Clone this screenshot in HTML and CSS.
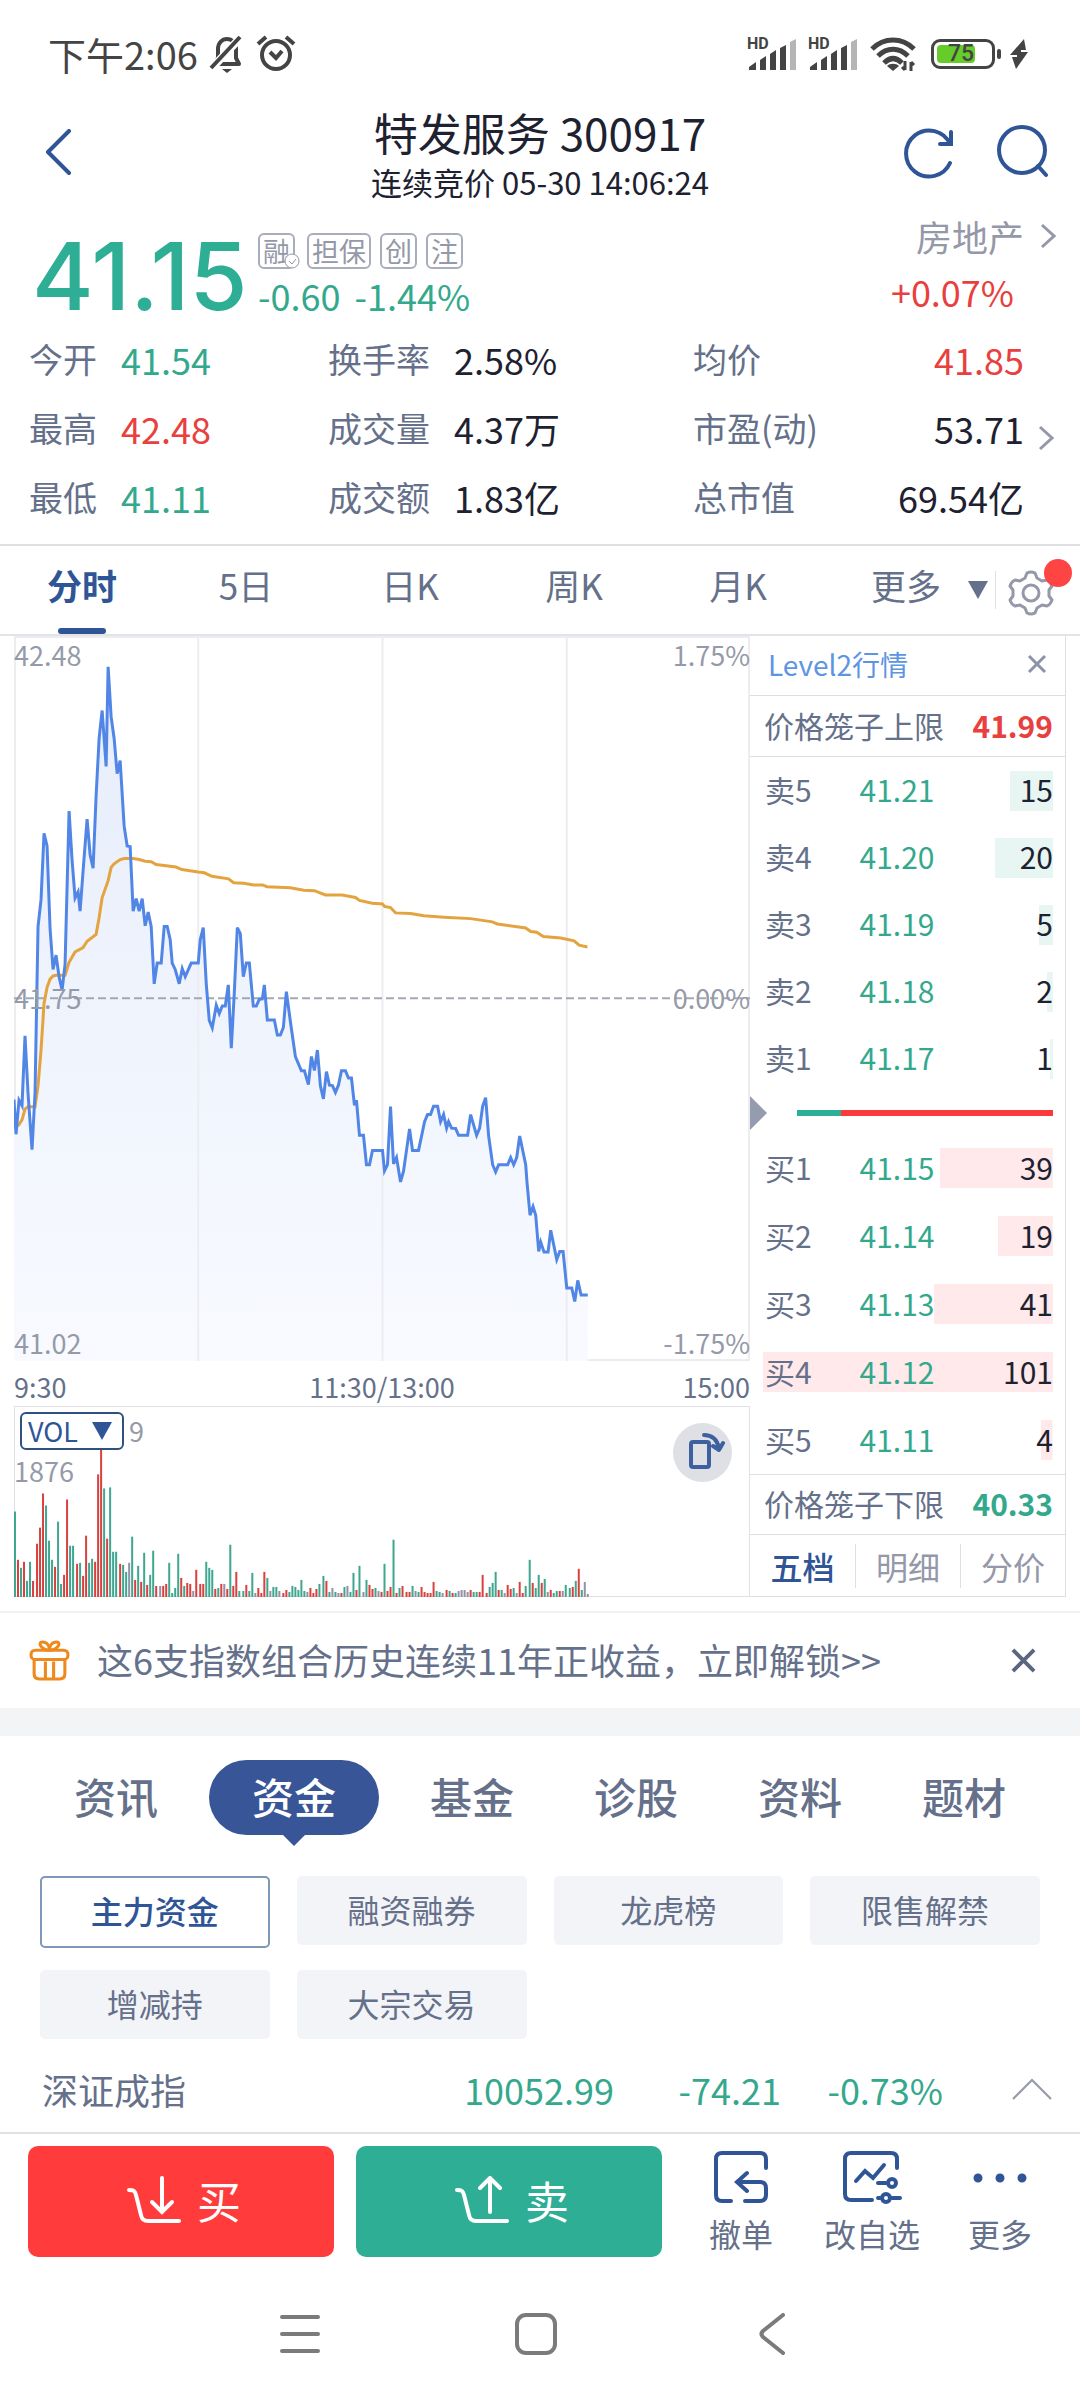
FILE: index.html
```html
<!DOCTYPE html>
<html lang="zh-CN">
  <head>
    <meta charset="UTF-8" />
    <meta name="viewport" content="width=device-width, initial-scale=1.0" />
    <title>特发服务 300917</title>
    <link rel="stylesheet" href="styles.css">
  </head>
  <body>
    <div class="status-bar">
      <div class="status-left">
        <span>下午2:06</span>
        <svg class="bell" viewBox="0 0 36 38" fill="none" stroke="#444" stroke-width="4">
          <path d="M6 29h24l-3-6V14c0-6-4-10-9-10s-9 4-9 10v9z" stroke-linejoin="round" />
          <path d="M32 2L3 33" stroke="#fff" stroke-width="8" />
          <path d="M31 2L2 33" />
          <path d="M13 34h10l-5 4z" fill="#444" stroke="none" />
        </svg>
        <svg class="alarm" viewBox="0 0 40 38" fill="none" stroke="#444" stroke-width="4">
          <circle cx="20" cy="20" r="14" />
          <path d="M2 9l8-7M38 9l-8-7M14 17l6 6 6-7" />
        </svg>
      </div>
      <div class="status-right">
        <svg class="signal" viewBox="0 0 50 34">
          <text x="0" y="12">HD</text>
          <path d="M2 33v-3l7-5v8zM13 33V23l6-4v14zM23 33V17l6-4v20zM33 33V11l6-3v25z" fill="#444" />
          <path d="M43 33V5l6-3v31z" fill="#b5b5b5" />
        </svg>
        <svg class="signal" viewBox="0 0 50 34">
          <text x="0" y="12">HD</text>
          <path d="M2 33v-3l7-5v8zM13 33V23l6-4v14zM23 33V17l6-4v20zM33 33V11l6-3v25z" fill="#444" />
          <path d="M43 33V5l6-3v31z" fill="#b5b5b5" />
        </svg>
        <svg class="wifi" viewBox="0 0 48 36" fill="none" stroke="#444" stroke-width="5">
          <path d="M3 13c12-12 30-12 42 0M9 20c9-9 21-9 30 0M15 27c6-6 12-6 18 0" />
          <path d="M18 30l6 5 6-5c-3-3-9-3-12 0z" fill="#444" stroke="none" />
          <path d="M36 25v9M36 34l-3-3M42 35v-9M42 26l3 3" stroke-width="3" />
        </svg>
        <span class="battery"><span class="battery-level">75</span></span>
        <svg class="bolt" viewBox="0 0 18 30"><path d="M14 0L0 16h7v2H2l4 12 12-17h-7v-2h5z" fill="#444" /></svg>
      </div>
    </div>

    <header class="header">
      <button class="icon-btn back" aria-label="返回">
        <svg viewBox="0 0 28 46" fill="none" stroke="#2f5597" stroke-width="4"><path d="M25 2L4 23l21 21" stroke-linecap="round" stroke-linejoin="round" /></svg>
      </button>
      <div class="title">
        <h1>特发服务 300917</h1>
        <p>连续竞价 05-30 14:06:24</p>
      </div>
      <div class="header-tools">
        <button class="icon-btn" aria-label="刷新">
          <svg viewBox="0 0 52 54" fill="none" stroke="#2f5597" stroke-width="4"><path d="M48 38A23 23 0 1 1 48 19M49 7v12H38" stroke-linecap="round" /></svg>
        </button>
        <button class="icon-btn" aria-label="搜索">
          <svg viewBox="0 0 52 54" fill="none" stroke="#2f5597" stroke-width="4"><circle cx="26" cy="25" r="23" /><path d="M42 41l8 9" stroke-linecap="round" /></svg>
        </button>
      </div>
    </header>

    <section class="quote">
      <strong class="price">41.15</strong>
      <div class="quote-info">
        <div class="tags">
          <span class="tag checked">融<svg viewBox="0 0 16 16" fill="#fff" stroke="#9498a8"><circle cx="8" cy="8" r="7" /><path d="M5 8l3 3 4-5" fill="none" /></svg></span>
          <span class="tag">担保</span>
          <span class="tag">创</span>
          <span class="tag">注</span>
        </div>
        <div class="change"><span>-0.60</span><span>-1.44%</span></div>
      </div>
      <a class="sector" href="#">
        <span class="sector-name">房地产</span>
        <svg class="chevron" viewBox="0 0 16 26"><path d="M2 2l12 11L2 24" /></svg>
        <span class="sector-change">+0.07%</span>
      </a>
    </section>

    <section class="stats">
      <dl>
        <div><dt>今开</dt><dd class="green">41.54</dd></div>
        <div><dt>最高</dt><dd class="red">42.48</dd></div>
        <div><dt>最低</dt><dd class="green">41.11</dd></div>
      </dl>
      <dl>
        <div><dt>换手率</dt><dd>2.58%</dd></div>
        <div><dt>成交量</dt><dd>4.37万</dd></div>
        <div><dt>成交额</dt><dd>1.83亿</dd></div>
      </dl>
      <dl class="wide">
        <div><dt>均价</dt><dd class="red">41.85</dd></div>
        <div><dt>市盈(动)</dt><dd>53.71</dd></div>
        <div><dt>总市值</dt><dd>69.54亿</dd></div>
      </dl>
      <svg class="chevron" viewBox="0 0 16 26"><path d="M2 2l12 11L2 24" /></svg>
    </section>

    <nav class="period-tabs">
      <button class="active">分时</button>
      <button>5日</button>
      <button>日K</button>
      <button>周K</button>
      <button>月K</button>
      <button class="more">更多<i class="caret"></i></button>
      <button class="settings" aria-label="设置">
        <svg viewBox="0 0 46 46" fill="none" stroke="#9498a8" stroke-width="3" stroke-linejoin="round">
          <path d="M19 3q4-2 8 0l2 5 5 3 5-1q4 2 5 6l-3 4v6l3 4q-1 4-5 6l-5-1-5 3-2 5q-4 2-8 0l-2-5-5-3-5 1q-4-2-5-6l3-4v-6l-3-4q1-4 5-6l5 1 5-3z" />
          <circle cx="23" cy="23" r="8" />
        </svg>
      </button>
    </nav>

    <main class="market">
      <div class="charts">
        <div class="price-chart">
          <svg viewBox="42 14 2205 2024" preserveAspectRatio="none">
            <defs>
              <linearGradient id="area" x1="0" y1="0" x2="0" y2="1">
                <stop offset="0" stop-color="#e6edfa" />
                <stop offset="1" stop-color="#f8faff" />
              </linearGradient>
            </defs>
            <path id="price-area" fill="url(#area)" />
            <path class="grid-line" d="M594 14V2038M1146 14V2038M1698 14V2038" />
            <path class="zero-line" d="M42 1025H2247" />
            <polyline class="avg-line" points="48,1385 57,1378 66,1365 75,1335 84,1328 105,1328 114,1270 123,1170 132,1040 141,995 150,972 159,963 168,961 195,961 207,925 225,896 249,884 261,866 288,847 297,800 306,745 324,697 333,660 342,650 360,638 372,635 399,635 417,638 435,643 453,644 468,652 527,659 545,666 594,673 612,675 635,685 685,692 700,703 730,704 760,709 787,709 800,714 870,717 910,724 942,725 975,737 1025,737 1065,744 1077,752 1115,760 1146,762 1152,769 1170,772 1185,787 1230,789 1270,795 1330,799 1410,803 1475,812 1490,818 1575,829 1590,839 1608,841 1628,853 1680,857 1720,865 1735,877 1760,882" />
            <polyline class="price-line" id="price-line" points="42,1308 48,1405 57,1310 66,1325 75,1130 84,1290 96,1448 105,1290 114,825 123,750 132,565 141,600 150,830 159,945 168,905 177,965 186,1003 195,930 207,503 216,640 225,745 234,728 240,782 249,670 261,525 270,625 279,662 288,460 297,300 306,222 318,378 324,100 333,240 342,300 351,398 360,362 372,545 381,600 390,602 399,782 408,747 417,782 426,747 435,823 444,785 453,825 462,985 471,927 483,927 492,825 501,825 510,862 516,927 525,945 537,985 546,943 555,965 573,927 594,927 600,862 609,828 618,985 627,1087 636,1108 648,1045 657,1068 666,1047 675,1047 684,988 693,1165 702,1010 711,828 720,845 729,965 738,927 747,927 759,1047 768,1047 777,1028 786,1027 792,988 801,1086 822,1086 831,1128 840,1128 849,1107 858,1007 870,1090 885,1188 903,1228 912,1228 924,1266 933,1188 942,1227 951,1170 960,1270 969,1306 978,1230 987,1268 996,1269 1005,1288 1014,1268 1023,1228 1035,1228 1044,1248 1053,1248 1062,1324 1068,1310 1077,1408 1089,1408 1098,1490 1107,1490 1116,1450 1146,1450 1152,1507 1161,1490 1170,1328 1179,1488 1188,1470 1200,1538 1209,1508 1227,1390 1236,1450 1254,1450 1272,1370 1281,1350 1290,1350 1299,1327 1311,1327 1320,1370 1329,1350 1338,1388 1344,1370 1353,1388 1365,1389 1374,1408 1401,1408 1410,1350 1428,1408 1437,1388 1446,1327 1455,1303 1464,1410 1476,1490 1485,1510 1494,1490 1521,1490 1530,1470 1539,1490 1548,1470 1557,1410 1575,1490 1579,1540 1588,1631 1597,1607 1605,1631 1614,1732 1620,1706 1630,1734 1642,1734 1650,1673 1668,1755 1677,1732 1687,1732 1698,1834 1713,1834 1722,1872 1731,1813 1741,1854 1761,1854" />
          </svg>
          <span class="label top-left">42.48</span>
          <span class="label top-right">1.75%</span>
          <span class="label mid-left">41.75</span>
          <span class="label mid-right">0.00%</span>
          <span class="label bottom-left">41.02</span>
          <span class="label bottom-right">-1.75%</span>
        </div>
        <div class="time-axis"><span>9:30</span><span>11:30/13:00</span><span>15:00</span></div>
        <div class="volume-chart">
          <svg id="volume" viewBox="0 0 735 190" preserveAspectRatio="none"></svg>
          <div class="volume-head">
            <button class="indicator">VOL<i class="caret"></i></button>
            <span>9</span>
          </div>
          <span class="volume-max">1876</span>
          <button class="rotate" aria-label="横屏">
            <svg viewBox="0 0 36 36" fill="none" stroke="#3d619f" stroke-width="4" stroke-linejoin="round">
              <rect x="2" y="9" width="18" height="25" rx="2" />
              <path d="M15 2c8 0 13 4 15 13M24 13l6 4 4-7" stroke-linecap="round" />
            </svg>
          </button>
        </div>
      </div>

      <aside class="order-book">
        <div class="book-row level2">
          <a href="#">Level2行情</a>
          <button class="icon-btn" aria-label="关闭">
            <svg viewBox="0 0 20 20" stroke="#8c93a5" stroke-width="3"><path d="M2 2l16 16M18 2L2 18" /></svg>
          </button>
        </div>
        <div class="book-row"><span>价格笼子上限</span><strong class="red">41.99</strong></div>
        <table class="depth sell">
          <tr style="--size: 15%"><th>卖5</th><td>41.21</td><td>15</td></tr>
          <tr style="--size: 20%"><th>卖4</th><td>41.20</td><td>20</td></tr>
          <tr style="--size: 5%"><th>卖3</th><td>41.19</td><td>5</td></tr>
          <tr style="--size: 2%"><th>卖2</th><td>41.18</td><td>2</td></tr>
          <tr style="--size: 1%"><th>卖1</th><td>41.17</td><td>1</td></tr>
        </table>
        <div class="ratio"><i class="pointer"></i><div class="ratio-bar"><div style="width: 17%"></div></div></div>
        <table class="depth buy">
          <tr style="--size: 39%"><th>买1</th><td>41.15</td><td>39</td></tr>
          <tr style="--size: 19%"><th>买2</th><td>41.14</td><td>19</td></tr>
          <tr style="--size: 41%"><th>买3</th><td>41.13</td><td>41</td></tr>
          <tr style="--size: 100%"><th>买4</th><td>41.12</td><td>101</td></tr>
          <tr style="--size: 4%"><th>买5</th><td>41.11</td><td>4</td></tr>
        </table>
        <div class="book-row lower"><span>价格笼子下限</span><strong class="green">40.33</strong></div>
        <div class="book-tabs">
          <button class="active">五档</button>
          <button>明细</button>
          <button>分价</button>
        </div>
      </aside>
    </main>

    <div class="promo">
      <svg class="gift" viewBox="0 0 40 40" fill="none" stroke="#ee8a1d" stroke-width="3">
        <rect x="2" y="10" width="36" height="9" rx="4" />
        <path d="M5 19v14q0 5 5 5h20q5 0 5-5V19M16 21v16M24 21v16M20 10C12 10 8 2 13 2s7 4 7 8c0-4 2-8 7-8s1 8-7 8" />
      </svg>
      <a href="#">这6支指数组合历史连续11年正收益，立即解锁&gt;&gt;</a>
      <button class="icon-btn" aria-label="关闭">
        <svg viewBox="0 0 26 26" stroke="#5a6580" stroke-width="4"><path d="M2 2l22 22M24 2L2 24" /></svg>
      </button>
    </div>

    <nav class="section-tabs">
      <button>资讯</button>
      <button class="active"><span>资金</span></button>
      <button>基金</button>
      <button>诊股</button>
      <button>资料</button>
      <button>题材</button>
    </nav>

    <div class="chips">
      <button class="active">主力资金</button>
      <button>融资融券</button>
      <button>龙虎榜</button>
      <button>限售解禁</button>
      <button>增减持</button>
      <button>大宗交易</button>
    </div>

    <div class="index-row">
      <span class="index-name">深证成指</span>
      <span class="index-value">10052.99</span>
      <span class="index-change">-74.21</span>
      <span class="index-percent">-0.73%</span>
      <svg viewBox="0 0 40 22" fill="none" stroke="#9498a8" stroke-width="2"><path d="M1 21L20 2l19 19" /></svg>
    </div>

    <footer class="trade-bar">
      <button class="trade buy-btn">
        <svg viewBox="0 0 54 48"><path d="M2 14c5 0 6 1 7 5l5 20q1 6 7 6h31M35 2v34M25 26l10 10 10-10" /></svg>买
      </button>
      <button class="trade sell-btn">
        <svg viewBox="0 0 54 48"><path d="M2 14c5 0 6 1 7 5l5 20q1 6 7 6h31M35 36V2M25 12L35 2l10 10" /></svg>卖
      </button>
      <button class="action">
        <svg viewBox="0 0 60 54"><path d="M20 51h-9q-6 0-6-6V9q0-6 6-6h38q6 0 6 6v9M36 23L26 32l10 9M27 32h22q6 0 6 6v7q0 6-6 6H34" /></svg>
        撤单
      </button>
      <button class="action">
        <svg viewBox="0 0 60 54"><path d="M30 50H9q-6 0-6-6V9q0-6 6-6h40q6 0 6 6v9M14 31l9-10 8 7 11-13M36 33h8M36 48h2M50 48h8" /><circle cx="50" cy="33" r="4" /><circle cx="44" cy="48" r="4" /></svg>
        改自选
      </button>
      <button class="action">
        <svg viewBox="0 0 60 54"><path class="dot" d="M8 28h0M30 28h0M52 28h0" /></svg>
        更多
      </button>
    </footer>

    <nav class="system-nav">
      <button aria-label="菜单"><svg viewBox="0 0 42 42"><path d="M3 4h36M3 21h36M3 38h36" /></svg></button>
      <button aria-label="主页"><svg viewBox="0 0 42 42"><rect x="2" y="2" width="38" height="38" rx="9" /></svg></button>
      <button aria-label="返回"><svg viewBox="0 0 42 42"><path d="M32 2L12 18q-3 3 0 6l20 16" /></svg></button>
    </nav>

    <script>
      // r = up, g = down, n = flat, followed by the bar height
      const volumes =
        "g85 r37 g29 r35 g16 g35 r16 r53 r69 r103 g91 g56 g37 r30 g75 g13 r22 r97 g51 g51 r33 g34 r21 r61 g34 g38 r35 r122 r152 g108 r58 g109 g45 g45 r33 g32 g25 n34 g60 r17 g31 r15 g44 r12 g22 g46 r11 n11 r11 r13 g34 g4 g9 g43 r19 g11 r14 r13 n6 r27 r13 r13 g35 g29 g27 r8 g9 r13 n13 r8 g52 r11 r25 g6 g6 r12 g6 g24 n4 r9 r4 r25 g19 n6 g10 g10 n6 r4 r7 g5 g11 g10 g7 g17 g6 n5 r9 r4 r8 g13 g21 r16 g5 n9 g5 n4 r4 g10 n11 g5 g24 r7 g31 n5 g17 r12 r8 g9 n6 r5 g33 r6 r10 g57 r4 g9 r11 r5 r5 g11 n6 g5 r10 r5 r4 r4 r15 g6 g5 n4 r7 g6 r4 g4 n6 n7 n7 n5 r7 g5 g5 r5 r22 r4 g10 g14 g25 r7 g7 n4 r12 r8 g9 n4 r15 r4 g11 g37 r14 g9 g22 r14 g18 n5 r7 g4 g6 r6 n6 g12 g9 r10 g16 r28 g7 n15 n3";
      const barColors = { r: "#d9413f", g: "#3fa690", n: "#9490a6" };
      const bars = volumes.split(" ");
      const step = 572 / (bars.length - 1);

      document.querySelector("#volume").innerHTML = bars
        .map((bar, i) => {
          const height = Number(bar.slice(1));
          return `<rect x="${Math.round(i * step)}" y="${190 - height}" width="2" height="${height}" fill="${barColors[bar[0]]}" />`;
        })
        .join("");

      const linePoints = document.querySelector("#price-line").getAttribute("points");
      document
        .querySelector("#price-area")
        .setAttribute("d", `M42 2038L${linePoints}L1761 2038z`);
    </script>
  </body>
</html>
```
FILE: styles.css
```css
* {
  box-sizing: border-box;
}

body {
  font-family: "Noto Sans CJK SC", "Noto Sans", sans-serif;
  background: #fff;
  color: #1d2130;
  margin: 0;
  font-size: 36px;
  line-height: 40px;
}

h1,
p,
dl,
dd {
  margin: 0;
}

button {
  font: inherit;
  color: inherit;
  background: none;
  border: none;
  padding: 0;
  cursor: pointer;
}

a {
  color: inherit;
  text-decoration: none;
}

svg {
  display: block;
}

.red {
  color: #e8403e;
}

.green {
  color: #34a88d;
}

.chevron {
  width: 16px;
  height: 26px;
  fill: none;
  stroke: #9498a8;
  stroke-width: 3;
}

.caret {
  border: 10px solid transparent;
  border-top: 18px solid #65708a;
  border-bottom: 0;
}

.icon-btn svg {
  width: 100%;
}

/* Status bar */
.status-bar {
  display: flex;
  justify-content: space-between;
  align-items: center;
  height: 102px;
  padding: 6px 52px 0 48px;
  color: #444;
}

.status-left,
.status-right {
  display: flex;
  align-items: center;
}

.status-left {
  font-size: 38px;
  gap: 11px;
}

.status-right {
  gap: 11px;
}

.bell {
  width: 36px;
}

.alarm {
  width: 40px;
}

.signal {
  width: 50px;
  height: 34px;
  overflow: visible;
}

.signal text {
  font: bold 16px Roboto, sans-serif;
  fill: #444;
}

.wifi {
  width: 48px;
}

.battery {
  position: relative;
  width: 64px;
  height: 30px;
  margin: 0 4px 0 3px;
  border: 3px solid #444;
  border-radius: 9px;
  padding: 3px;
}

.battery::after {
  content: "";
  position: absolute;
  top: 7px;
  right: -9px;
  width: 4px;
  height: 10px;
  border-radius: 2px;
  background: #444;
}

.battery-level {
  display: block;
  width: 38px;
  height: 18px;
  border-radius: 4px;
  background: #66cc2a;
  font: 500 23px/18px Roboto, sans-serif;
  padding-left: 11px;
}

.bolt {
  width: 18px;
}

/* Header */
.header {
  display: grid;
  grid-template-columns: 166px 1fr 178px;
  align-items: center;
  height: 106px;
  padding: 0 32px 6px 44px;
}

.back {
  width: 28px;
}

.title {
  text-align: center;
}

h1 {
  font-size: 44px;
  line-height: 60px;
  font-weight: normal;
}

.title p {
  font-size: 31px;
}

.header-tools {
  display: flex;
  justify-content: flex-end;
  gap: 42px;
}

.header-tools .icon-btn {
  width: 52px;
}

/* Quote */
.quote {
  display: flex;
  gap: 16px;
  height: 116px;
  padding: 8px 24px 0 32px;
}

.price {
  width: 210px;
  font-family: Inter, "Noto Sans CJK SC", sans-serif;
  font-size: 94px;
  line-height: 120px;
  font-weight: 500;
  color: #2eae94;
}

.quote-info {
  padding-top: 17px;
  flex: 1;
}

.tags {
  display: flex;
  gap: 9px;
}

.tag {
  position: relative;
  border: 2px solid #a9adbb;
  border-radius: 6px;
  padding: 0 3px;
  font-size: 27px;
  line-height: 32px;
  color: #9498a8;
}

.tag.checked {
  margin-right: 3px;
}

.tag svg {
  position: absolute;
  right: -7px;
  bottom: -2px;
  width: 16px;
}

.change {
  display: flex;
  gap: 14px;
  margin-top: 6px;
  color: #34a88d;
}

.sector {
  display: grid;
  grid-template-columns: auto 16px;
  column-gap: 16px;
  row-gap: 15px;
  align-content: start;
  justify-items: end;
  align-items: center;
  color: #9498a8;
}

.sector-change {
  color: #e8403e;
  margin-right: 10px;
}

/* Stats */
.stats {
  display: grid;
  grid-template-columns: 299fr 365fr 331fr 40px;
  align-items: center;
  padding: 0 16px 13px 29px;
  border-bottom: 2px solid #dfe0e3;
}

.stats dl > div {
  display: flex;
  align-items: center;
  height: 69px;
}

.stats dt {
  color: #65708a;
  font-size: 34px;
  margin-right: 24px;
}

.stats .wide > div {
  justify-content: space-between;
}

.stats .chevron {
  justify-self: center;
  margin: 20px 0 0 4px;
}

/* Period tabs */
.period-tabs {
  display: grid;
  grid-template-columns: repeat(6, 1fr) 96px;
  height: 90px;
  border-bottom: 2px solid #e3e4e7;
  color: #65708a;
  font-size: 35px;
}

.period-tabs button {
  position: relative;
  padding-bottom: 10px;
}

.period-tabs .active {
  color: #2f5597;
  font-weight: bold;
}

.period-tabs .active::after {
  content: "";
  position: absolute;
  left: calc(50% - 24px);
  bottom: 0;
  width: 48px;
  height: 6px;
  border-radius: 3px;
  background: #2f5597;
}

.period-tabs .more {
  padding-left: 8px;
}

.more .caret {
  position: absolute;
  right: -4px;
  top: 35px;
}

.settings::before {
  content: "";
  position: absolute;
  left: 11px;
  top: 25px;
  height: 38px;
  border-left: 1px solid #dfe0e3;
}

.settings::after {
  content: "";
  position: absolute;
  right: 8px;
  top: 13px;
  width: 28px;
  height: 28px;
  border-radius: 50%;
  background: #ff4444;
}

.settings svg {
  width: 46px;
  margin: 16px 0 0 24px;
}

/* Charts */
.market {
  display: grid;
  grid-template-columns: 736fr 316fr;
  padding: 0 14px;
}

.charts {
  display: flex;
  flex-direction: column;
  font-size: 27px;
  color: #959aa9;
}

.price-chart {
  position: relative;
  height: 725px;
  box-shadow: inset 0 0 0 2px #ededf1;
}

.price-chart svg,
.volume-chart > svg {
  width: 100%;
  height: 100%;
}

.price-chart path,
.price-chart polyline {
  vector-effect: non-scaling-stroke;
}

.grid-line {
  stroke: #ededf1;
  stroke-width: 2;
}

.zero-line {
  stroke: #a3a8b5;
  stroke-width: 2;
  stroke-dasharray: 8 4;
}

.avg-line,
.price-line {
  fill: none;
  stroke: #e3a43f;
  stroke-width: 3;
}

.price-line {
  stroke: #5186e6;
}

.label {
  position: absolute;
  line-height: 36px;
}

.top-left,
.mid-left,
.bottom-left {
  left: 0;
}

.top-right,
.mid-right,
.bottom-right {
  right: 0;
}

.top-left,
.top-right {
  top: 1px;
}

.mid-left,
.mid-right {
  top: calc(50% - 19px);
}

.bottom-left,
.bottom-right {
  bottom: 0;
}

.time-axis {
  display: grid;
  grid-template-columns: 1fr auto 1fr;
  height: 45px;
  padding-top: 6px;
  color: #65708a;
}

.time-axis span:last-child {
  text-align: right;
}

.volume-chart {
  position: relative;
  flex: 1;
  min-height: 191px;
  box-shadow: inset 0 0 0 1px #e0e0e5;
}

.volume-chart > svg {
  position: absolute;
  top: 0;
  left: 0;
}

.volume-head {
  position: relative;
  display: flex;
  align-items: center;
  gap: 5px;
  padding: 5px 0 0 6px;
}

.indicator {
  display: flex;
  align-items: center;
  gap: 14px;
  height: 38px;
  padding: 0 10px 0 6px;
  border: 2px solid #2f5080;
  border-radius: 6px;
  background: #fff;
  color: #2f5597;
}

.indicator .caret {
  border-top-color: #2f5597;
}

.volume-max {
  position: relative;
}

.rotate {
  position: absolute;
  top: 17px;
  right: 18px;
  width: 59px;
  height: 59px;
  border-radius: 50%;
  background: #dfe0e6;
}

.rotate svg {
  width: 36px;
  margin: 0 0 4px 16px;
}

/* Order book */
.order-book {
  border-right: 1px solid #dddfe3;
  border-bottom: 1px solid #dddfe3;
  font-size: 30px;
  color: #65708a;
}

.book-row {
  display: flex;
  justify-content: space-between;
  align-items: center;
  height: 61px;
  padding: 0 12px 3px 14px;
  border-bottom: 1px solid #dddfe3;
}

.level2 {
  height: 60px;
  padding: 0 18px 3px;
  font-size: 28px;
  color: #5e95e3;
}

.level2 .icon-btn {
  width: 20px;
}

.lower {
  border-top: 1px solid #dddfe3;
}

.depth {
  width: calc(100% - 25px);
  margin: 0 12px 0 13px;
  border-collapse: collapse;
  table-layout: fixed;
}

.depth tr {
  height: 67px;
  background: linear-gradient(#e7f6f3, #e7f6f3) no-repeat right center / var(--size) 40px;
}

.depth.buy tr {
  height: 68px;
  background-image: linear-gradient(#ffe9ea, #ffe9ea);
}

.depth th,
.depth td {
  padding: 0 0 3px;
  font-weight: normal;
  text-align: left;
}

.depth th {
  width: 86px;
  padding-left: 2px;
}

.depth td {
  width: 96px;
  color: #34a88d;
  text-align: center;
}

.depth td:last-child {
  width: auto;
  color: #1d2130;
  text-align: right;
}

.ratio {
  display: flex;
  align-items: center;
  height: 42px;
  padding-right: 12px;
}

.pointer {
  border: 17px solid transparent;
  border-left-color: #959cad;
  border-right: 0;
  margin-right: 30px;
}

.ratio-bar {
  flex: 1;
  background: #fb3b3b;
}

.ratio-bar div {
  height: 6px;
  background: #2eae94;
}

.book-tabs {
  display: grid;
  grid-template-columns: repeat(3, 1fr);
  padding: 9px 0 8px;
  font-size: 32px;
  line-height: 44px;
  color: #9498a8;
}

.book-tabs button + button {
  border-left: 1px solid #dddfe3;
}

.book-tabs .active {
  color: #2f5597;
  font-weight: 500;
}

/* Promo */
.promo {
  display: flex;
  align-items: center;
  height: 125px;
  margin-top: 14px;
  padding: 0 44px 0 29px;
  border-top: 2px solid #f0f1f3;
  border-bottom: 28px solid #f3f4f6;
  color: #65708a;
}

.promo a {
  padding-bottom: 3px;
}

.gift {
  width: 41px;
  margin-right: 27px;
}

.promo .icon-btn {
  width: 25px;
  margin-left: auto;
}

/* Section tabs */
.section-tabs {
  display: flex;
  padding: 24px 34px 41px;
  font-size: 42px;
  line-height: 72px;
  font-weight: 500;
  color: #65708a;
}

.section-tabs button {
  flex: 164;
  padding-bottom: 3px;
}

.section-tabs .active {
  flex: 192;
  padding: 0;
  color: #fff;
}

.section-tabs .active span {
  position: relative;
  display: block;
  margin: 0 11px;
  padding-bottom: 3px;
  border-radius: 38px;
  background: #375597;
}

.section-tabs .active span::after {
  content: "";
  position: absolute;
  top: 100%;
  left: calc(50% - 11px);
  border: 11px solid transparent;
  border-top-color: #375597;
  border-bottom: 0;
}

/* Chips */
.chips {
  display: grid;
  grid-template-columns: repeat(4, 1fr);
  gap: 25px 27px;
  padding: 0 40px;
  font-size: 32px;
  color: #65708a;
}

.chips button {
  height: 69px;
  padding-bottom: 4px;
  border-radius: 5px;
  background: #f3f4f7;
}

.chips .active {
  height: 72px;
  margin-bottom: -3px;
  border: 2px solid #7d98ba;
  background: #fff;
  color: #2f5597;
  font-weight: 500;
}

.index-row {
  display: grid;
  grid-template-columns: 4fr 172px 167px 162px 109px;
  align-items: center;
  height: 95px;
  padding: 7px 28px 0 42px;
  border-bottom: 2px solid #e0e1e4;
  color: #34a88d;
  text-align: right;
}

.index-name {
  color: #65708a;
  text-align: left;
}

.index-row svg {
  width: 40px;
  justify-self: end;
}

/* Trade bar */
.trade-bar {
  display: grid;
  grid-template-columns: 328fr 328fr 114fr 148fr 108fr;
  padding: 12px 26px 0 28px;
  color: #65708a;
  font-size: 32px;
}

.trade {
  display: flex;
  justify-content: center;
  align-items: center;
  gap: 16px;
  height: 111px;
  margin-right: 22px;
  padding: 0 0 3px 6px;
  border-radius: 10px;
  background: #ff3b3b;
  color: #fff;
  font-size: 44px;
}

.sell-btn {
  background: #2eae94;
}

.trade svg {
  width: 54px;
  fill: none;
  stroke: #fff;
  stroke-width: 4;
  stroke-linecap: round;
}

.action {
  display: flex;
  flex-direction: column;
  align-items: center;
  gap: 9px;
  padding-top: 4px;
}

.action svg {
  width: 60px;
  fill: none;
  stroke: #2f5597;
  stroke-width: 4;
  stroke-linecap: round;
}

.action .dot {
  stroke-width: 9;
}

/* System navigation */
.system-nav {
  display: flex;
  justify-content: center;
  gap: 194px;
  padding: 56px 8px 42px 0;
}

.system-nav svg {
  width: 42px;
  fill: none;
  stroke: #7b7b7b;
  stroke-width: 4;
  stroke-linecap: round;
}
```
